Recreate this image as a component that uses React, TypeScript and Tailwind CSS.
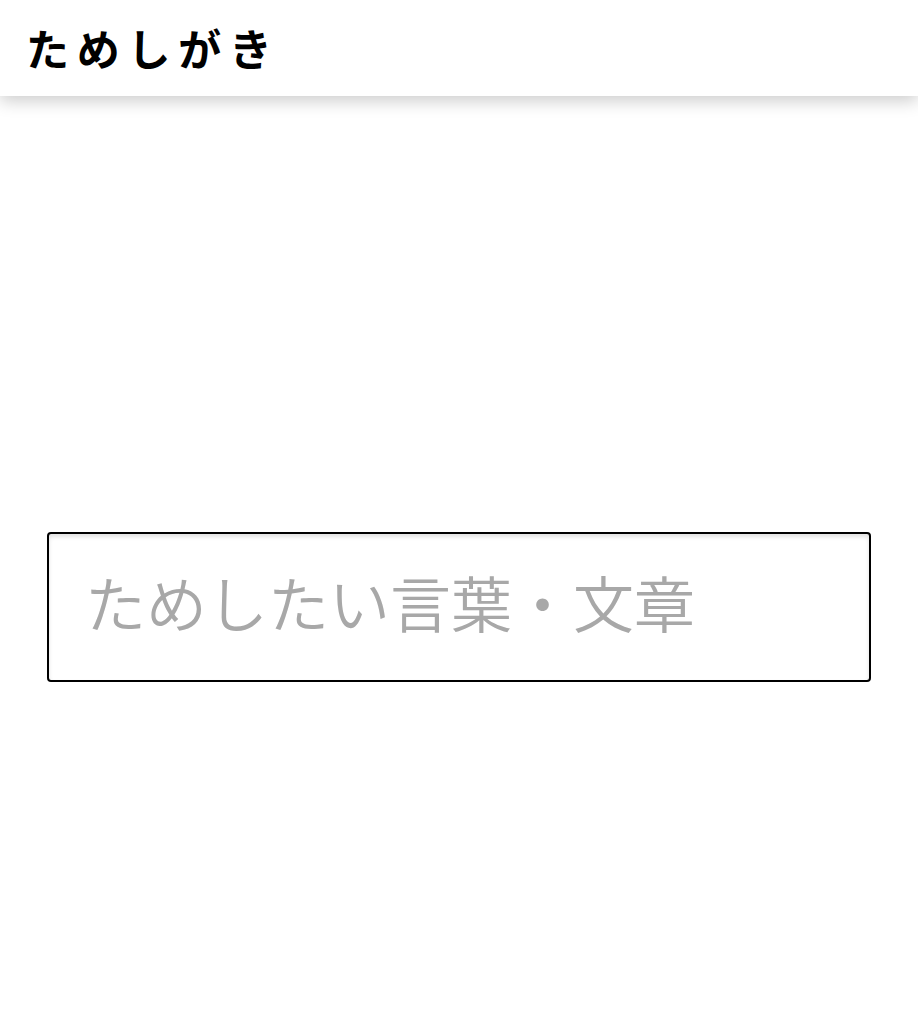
import React, { useState } from "react";

export default function App() {
  const [text, setText] = useState("");

  return (
    <div className="min-h-screen bg-white font-['Noto_Sans_CJK_JP',sans-serif]">
      <header className="relative z-10 h-[96px] flex items-center pl-[26px] bg-white shadow-[0_5px_16px_rgba(0,0,0,0.2)]">
        <h1 className="text-[43px] leading-none font-bold tracking-[0.18em] text-black -mt-[2px]">
          ためしがき
        </h1>
      </header>

      <main className="px-[47px] pt-[436px]">
        <input
          type="text"
          value={text}
          onChange={(e) => setText(e.target.value)}
          placeholder="ためしたい言葉・文章"
          className="block w-full h-[150px] pl-[36px] pr-4 pb-3 rounded-[4px] border-2 border-black bg-white text-[61px] font-[350] text-black placeholder:text-[#a8a8a8] outline-none shadow-[inset_0_3px_4px_rgba(0,0,0,0.12)]"
        />
      </main>
    </div>
  );
}
